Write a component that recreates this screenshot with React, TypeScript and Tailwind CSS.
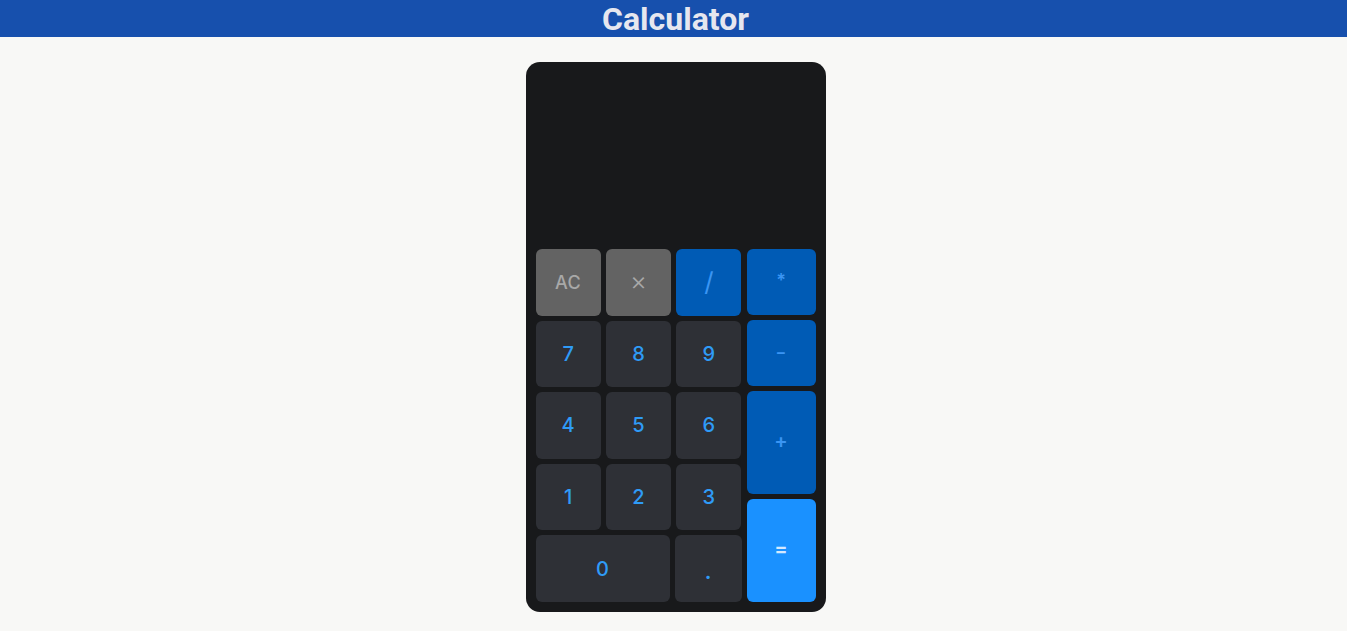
import React from "react";

const digit = "bg-[#2e3036] text-[#2f9bf7]";
const op = "bg-[#005bb5] text-[#3a95f3]";
const gray = "bg-[#636363] text-[#a8a8a8]";

function Btn({ label, cls, className = "" }: { label: string; cls: string; className?: string }) {
  return (
    <button className={`flex items-center justify-center rounded-[6px] ${cls} ${className}`}>
      {label}
    </button>
  );
}

export default function App() {
  return (
    <div className="min-h-[631px] bg-[#f8f8f6]" style={{ fontFamily: "Inter, 'Open Sans', sans-serif" }}>
      <header className="h-[37px] bg-[#1750ad] flex items-center justify-center pl-[4px]">
        <h1
          className="text-[32px] font-bold text-[#e6e7ef] leading-none"
          style={{ fontFamily: "Roboto, 'Liberation Sans', sans-serif" }}
        >
          Calculator
        </h1>
      </header>
      <div className="flex justify-center pt-[25px] pl-[4px]">
        <div className="w-[300px] h-[550px] rounded-[14px] bg-[#18191b] flex flex-col px-[10px] pb-[10px]">
          <div className="h-[187px]" />
          <div className="flex gap-[5px] h-[353px]">
            <div className="w-[206px] flex flex-col gap-[5px]">
              <div className="flex-1 flex gap-[5px]">
                <Btn label="AC" cls={gray} className="flex-1 text-[18px] font-medium tracking-[0.5px]" />
                <Btn label="×" cls={gray} className="flex-1 text-[26px] font-light pb-[4px]" />
                <Btn label="/" cls={op} className="flex-1 text-[26px] font-normal pb-[2px]" />
              </div>
              <div className="flex-1 flex gap-[5px]">
                <Btn label="7" cls={digit} className="flex-1 text-[20px] font-medium" />
                <Btn label="8" cls={digit} className="flex-1 text-[20px] font-medium" />
                <Btn label="9" cls={digit} className="flex-1 text-[20px] font-medium" />
              </div>
              <div className="flex-1 flex gap-[5px]">
                <Btn label="4" cls={digit} className="flex-1 text-[20px] font-medium" />
                <Btn label="5" cls={digit} className="flex-1 text-[20px] font-medium" />
                <Btn label="6" cls={digit} className="flex-1 text-[20px] font-medium" />
              </div>
              <div className="flex-1 flex gap-[5px]">
                <Btn label="1" cls={digit} className="flex-1 text-[20px] font-medium" />
                <Btn label="2" cls={digit} className="flex-1 text-[20px] font-medium" />
                <Btn label="3" cls={digit} className="flex-1 text-[20px] font-medium" />
              </div>
              <div className="flex-1 flex gap-[5px]">
                <Btn label="0" cls={digit} className="flex-[2] text-[20px] font-medium" />
                <Btn label="." cls={digit} className="flex-1 text-[20px] font-bold pt-[6px]" />
              </div>
            </div>
            <div className="w-[69px] flex flex-col gap-[5px]">
              <Btn label="*" cls={op} className="h-[66px] text-[18px] font-semibold pb-[4px]" />
              <Btn label="−" cls={op} className="h-[66px] text-[16px] font-semibold pb-[2px]" />
              <Btn label="+" cls={op} className="flex-1 text-[20px] font-semibold pb-[2px]" />
              <Btn label="=" cls="bg-[#1a91ff] text-[#d5e9ff]" className="flex-1 text-[20px] font-semibold pb-[3px]" />
            </div>
          </div>
        </div>
      </div>
    </div>
  );
}
